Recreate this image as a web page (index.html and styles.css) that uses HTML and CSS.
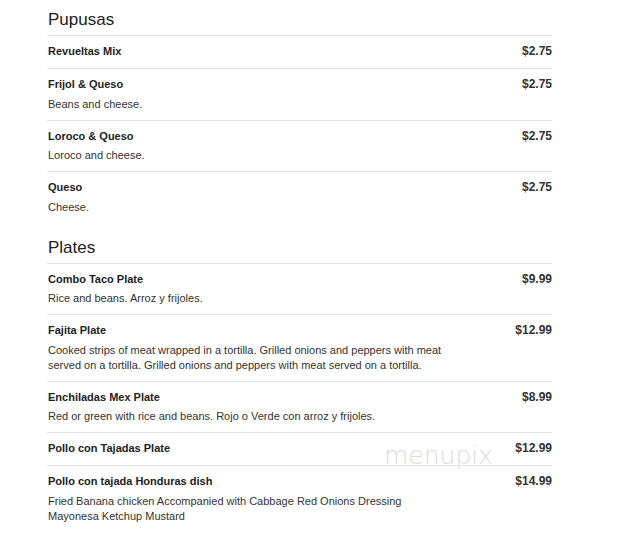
FILE: index.html
```html
<!DOCTYPE html>
<html>
<head>
<meta charset="utf-8">
<link rel="stylesheet" href="styles.css">
</head>
<body>
<div class="menu">
  <section class="section">
    <h2 class="section-title">Pupusas</h2>
    <div class="item">
      <div class="info"><div class="name">Revueltas Mix</div></div>
      <div class="price">$2.75</div>
    </div>
    <div class="item">
      <div class="info"><div class="name">Frijol &amp; Queso</div><div class="desc">Beans and cheese.</div></div>
      <div class="price">$2.75</div>
    </div>
    <div class="item">
      <div class="info"><div class="name">Loroco &amp; Queso</div><div class="desc">Loroco and cheese.</div></div>
      <div class="price">$2.75</div>
    </div>
    <div class="item">
      <div class="info"><div class="name">Queso</div><div class="desc">Cheese.</div></div>
      <div class="price">$2.75</div>
    </div>
  </section>
  <section class="section">
    <h2 class="section-title">Plates</h2>
    <div class="item">
      <div class="info"><div class="name">Combo Taco Plate</div><div class="desc">Rice and beans. Arroz y frijoles.</div></div>
      <div class="price">$9.99</div>
    </div>
    <div class="item">
      <div class="info"><div class="name">Fajita Plate</div><div class="desc">Cooked strips of meat wrapped in a tortilla. Grilled onions and peppers with meat served on a tortilla. Grilled onions and peppers with meat served on a tortilla.</div></div>
      <div class="price">$12.99</div>
    </div>
    <div class="item">
      <div class="info"><div class="name">Enchiladas Mex Plate</div><div class="desc">Red or green with rice and beans. Rojo o Verde con arroz y frijoles.</div></div>
      <div class="price">$8.99</div>
    </div>
    <div class="item">
      <div class="info"><div class="name">Pollo con Tajadas Plate</div></div>
      <div class="price">$12.99</div>
    </div>
    <div class="item">
      <div class="info"><div class="name">Pollo con tajada Honduras dish</div><div class="desc">Fried Banana chicken Accompanied with Cabbage Red Onions Dressing Mayonesa Ketchup Mustard</div></div>
      <div class="price">$14.99</div>
    </div>
  </section>
</div>
<div class="watermark">menupix</div>
</body>
</html>
```
FILE: styles.css
```css
html, body {
  margin: 0;
  padding: 0;
  background: #ffffff;
}
body {
  font-family: "Liberation Sans", Arial, sans-serif;
  color: #222;
  position: relative;
  width: 620px;
  height: 540px;
  overflow: hidden;
}
.menu {
  margin-left: 47px;
  width: 505px;
}
.section + .section {
  margin-top: 5px;
}
.section-title {
  margin: 0;
  padding: 10px 0 5px 1px;
  font-size: 17px;
  line-height: 20px;
  font-weight: normal;
  color: #222;
  border-bottom: 1px solid #e3e3e3;
}
.item {
  display: flex;
  justify-content: space-between;
  align-items: flex-start;
  padding: 7px 0 8px 1px;
}
.item + .item {
  border-top: 1px solid #e3e3e3;
}
.info {
  max-width: 396px;
}
.name {
  font-size: 11px;
  font-weight: bold;
  line-height: 16px;
  color: #222;
}
.desc {
  margin-top: 4.5px;
  font-size: 11px;
  line-height: 15px;
  color: #333;
}
.price {
  font-size: 12px;
  font-weight: bold;
  line-height: 17px;
  color: #333;
}
.watermark {
  position: absolute;
  left: 384px;
  top: 441px;
  font-family: "DejaVu Sans", sans-serif;
  font-weight: 200;
  font-size: 25px;
  line-height: 30px;
  color: #dcdcdc;
}
```
